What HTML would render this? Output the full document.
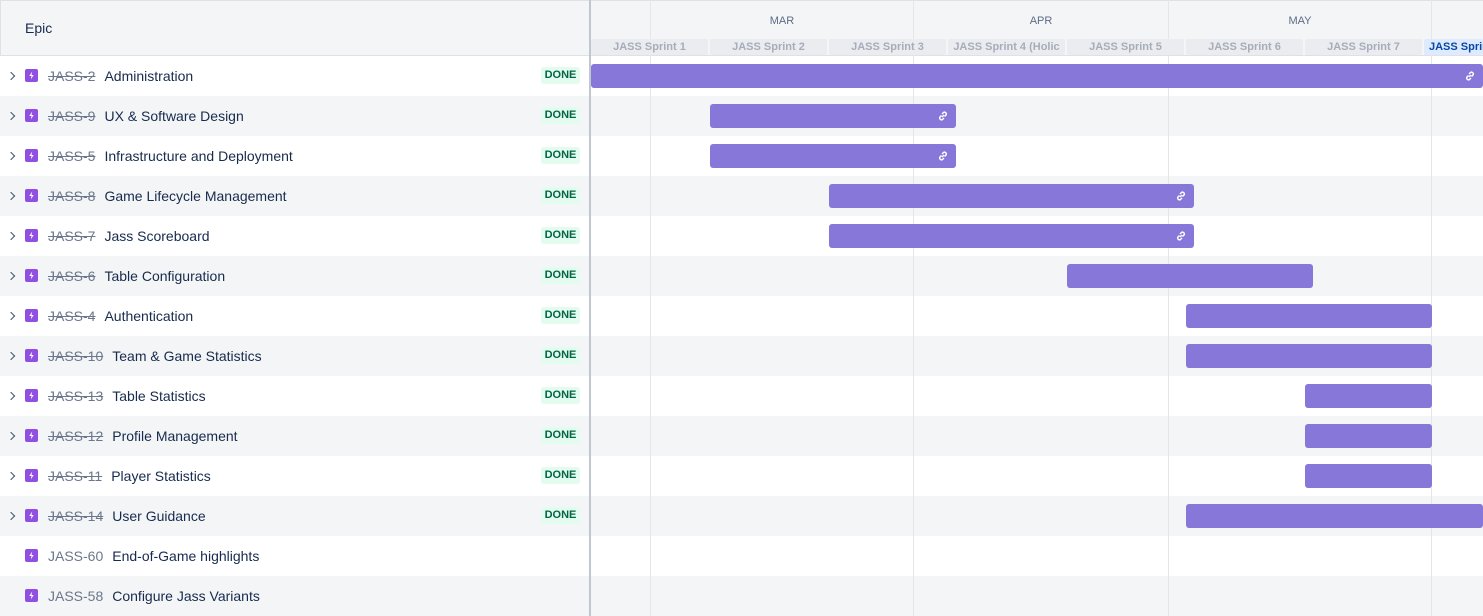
<!DOCTYPE html>
<html><head><style>
body{margin:0;width:1483px;height:616px;overflow:hidden;font-family:"Liberation Sans",Arial,sans-serif;background:#fff;position:relative}
.hdr{position:absolute;left:0;top:0;width:1483px;height:56px;background:#f4f5f7;border-bottom:1px solid #dfe1e6;border-top:1px solid #dfe1e6;border-left:1px solid #dfe1e6;box-sizing:border-box}
.epic{position:absolute;left:25px;top:20px;font-size:14px;color:#172b4d}
.vsep{position:absolute;left:589px;top:0;width:2px;height:616px;background:#c1c7d0}
.rowbg{position:absolute;left:0;width:1483px;height:40px}
.rowbg.alt{background:#f4f5f7}
.row{position:absolute;left:0;width:589px;height:40px}
.chev{position:absolute;left:8px;top:17px;width:5px;height:5px;border-right:1.8px solid #42526e;border-top:1.8px solid #42526e;transform:rotate(45deg)}
.ic{position:absolute;left:25px;top:13px;width:13px;height:13px;background:#904ee2;border-radius:2px}
.key{position:absolute;left:48px;top:12px;font-size:14px;color:#6b778c;white-space:nowrap}
.ttl{font-size:14px;color:#172b4d;margin-left:9px;display:inline-block}
.done{position:absolute;left:541px;top:11px;width:39px;height:17px;background:#e3fcef;color:#006644;font-size:11px;font-weight:bold;text-align:center;line-height:17px;border-radius:3px}
.bar{position:absolute;height:24px;background:#8777d9;border-radius:3px}
.lnk{position:absolute;right:7px;top:6px}
.vl{position:absolute;top:0;width:1px;height:616px;background:#e4e6ea}
.mon{position:absolute;top:15px;font-size:11px;color:#5e6c84;transform:translateX(-50%)}
.sp{position:absolute;top:39px;height:16px;width:117px;background:#ebecf0;color:#a5adba;font-size:11px;font-weight:bold;text-align:center;line-height:16px;white-space:nowrap;overflow:hidden;border-radius:2px}
</style></head><body>
<div class="hdr"></div>
<div class="epic">Epic</div>
<div id="bgs"></div>
<div class="vl" style="left:650px"></div>
<div class="vl" style="left:913px"></div>
<div class="vl" style="left:1168px"></div>
<div class="vl" style="left:1431px"></div>
<div class="mon" style="left:782px">MAR</div>
<div class="mon" style="left:1041px">APR</div>
<div class="mon" style="left:1300px">MAY</div>
<div class="sp" style="left:591px">JASS Sprint 1</div>
<div class="sp" style="left:710px">JASS Sprint 2</div>
<div class="sp" style="left:829px">JASS Sprint 3</div>
<div class="sp" style="left:948px">JASS Sprint 4 (Holic</div>
<div class="sp" style="left:1067px">JASS Sprint 5</div>
<div class="sp" style="left:1186px">JASS Sprint 6</div>
<div class="sp" style="left:1305px">JASS Sprint 7</div>
<div class="sp" style="left:1424px;width:59px;background:#deebff;color:#0747a6;text-align:left;padding-left:5px;box-sizing:border-box">JASS Sprint 8</div>
<div id="rows"></div>
<div class="vsep"></div>
<script>
const d=[["JASS-2","Administration",591,1483,1],["JASS-9","UX &amp; Software Design",710,956,1],["JASS-5","Infrastructure and Deployment",710,956,1],["JASS-8","Game Lifecycle Management",829,1194,1],["JASS-7","Jass Scoreboard",829,1194,1],["JASS-6","Table Configuration",1067,1313,0],["JASS-4","Authentication",1186,1432,0],["JASS-10","Team &amp; Game Statistics",1186,1432,0],["JASS-13","Table Statistics",1305,1432,0],["JASS-12","Profile Management",1305,1432,0],["JASS-11","Player Statistics",1305,1432,0],["JASS-14","User Guidance",1186,1483,0],["JASS-60","End-of-Game highlights",0,0,0],["JASS-58","Configure Jass Variants",0,0,0]];
const link='<svg class="lnk" width="12" height="12" viewBox="0 0 12 12" fill="none" stroke="#fff" stroke-width="1.4"><path d="M5 7l2-2M4.5 5.5L3 7a1.8 1.8 0 0 0 2.5 2.5L7 8M7.5 6.5L9 5a1.8 1.8 0 0 0-2.5-2.5L5 4"/></svg>';
let h='',b='';
d.forEach((r,i)=>{const done=i<12;const t=56+i*40;
b+=`<div class="rowbg${i%2?' alt':''}" style="top:${t}px"></div>`;
h+=`<div class="row" style="top:${t}px">`+
(done?'<div class="chev"></div>':'')+
`<div class="ic"><svg width="13" height="13" viewBox="0 0 13 13"><path d="M7.2 2.5L4.3 7h2.2L5.8 10.5 8.7 6H6.5z" fill="#fff"/></svg></div>`+
`<div class="key"><span${done?' style="text-decoration:line-through"':''}>${r[0]}</span><span class="ttl">${r[1]}</span></div>`+
(done?'<div class="done">DONE</div>':'')+'</div>'+
(r[3]?`<div class="bar" style="top:${t+8}px;left:${r[2]}px;width:${r[3]-r[2]}px">${r[4]?link:''}</div>`:'');});
document.getElementById('bgs').innerHTML=b;
document.getElementById('rows').innerHTML=h;
</script>
</body></html>
